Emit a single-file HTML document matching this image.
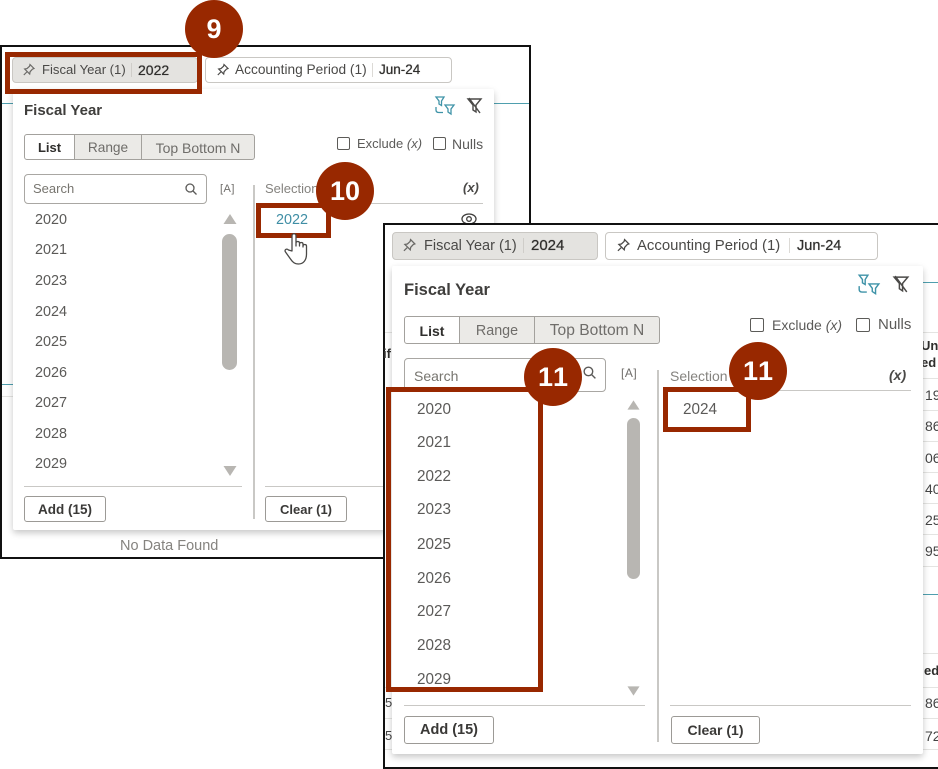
<!DOCTYPE html>
<html lang="en">
<head>
<meta charset="utf-8">
<title>Fiscal Year filter</title>
<style>
html,body{margin:0;padding:0;background:#fff}
body{position:relative;width:938px;height:769px;overflow:hidden;font-family:"Liberation Sans",sans-serif;color:#3f3e3c;filter:blur(.3px)}
div,span,svg{position:absolute;box-sizing:border-box}
.t{white-space:nowrap;line-height:20px;height:20px}
.v{text-shadow:0 0 .6px #2f2e2c}
.frame{background:#fff;border:2px solid #111}
.pop{background:#fff;box-shadow:0 3px 7px rgba(0,0,0,.22);border-radius:2px}
.chip{border:1px solid #c9c7c3;border-radius:4px;background:#fff}
.chip.on{background:#e4e3e0}
.btn{border:1px solid #9c9a96;border-radius:3px;background:#fff;text-align:center;font-weight:bold;color:#3a3937;white-space:nowrap}
.seg{border:1px solid #a3a19d;background:#ebeae7;text-align:center;color:#6f6d6a;white-space:nowrap}
.seg.on{background:#fff;color:#2f2e2c;font-weight:bold}
.cb{border:1.5px solid #5c5b58;border-radius:2px;background:#fff}
.hr{background:#c9c8c5;height:1px}
.vr{background:#c9c8c5;width:2px}
.sb{background:#b8b6b2;border-radius:8px}
.y{color:#5b5a58;white-space:nowrap;line-height:20px;height:20px}
.red{border:5px solid #982800}
.c{background:#982800;border-radius:50%;width:58px;height:58px;color:#fff;font-weight:bold;font-size:27px;line-height:58px;text-align:center;font-kerning:none}
.bg{color:#444;font-size:14px;white-space:nowrap;line-height:18px}
.ln{width:15px;height:1px;background:#e4e4e2;left:923px}
.ll{width:7px;height:1px;background:#e4e4e2;left:385px}
</style>
</head>
<body>

<!-- FRAME 1 -->
<div class="frame" style="left:0;top:45px;width:531px;height:514px"></div>
<div style="left:2px;top:103px;width:11px;height:1px;background:#4f9fae"></div>
<div style="left:494px;top:103px;width:35px;height:1px;background:#4f9fae"></div>
<div style="left:2px;top:384px;width:11px;height:1px;background:#4f9fae"></div>
<div style="left:2px;top:396px;width:11px;height:1px;background:#e4e4e2"></div>

<div class="chip on" style="left:12px;top:57px;width:186px;height:26px"></div>
<svg style="left:22px;top:63px" width="14" height="14" viewBox="0 0 14 14" fill="none" stroke="#6a6966" stroke-width="1.2"><path d="M8 1.500l4 4-1.500.6-2.400 2.600-.4 2.300-5-5 2.300-.4 2.600-2.400zM4.800 9L1.800 12"/></svg>
<span class="t" style="left:42px;top:60px;font-size:13.100px;color:#4a4947">Fiscal Year (1)</span>
<div style="left:131px;top:63px;width:1px;height:14px;background:#cfcdc9"></div>
<span class="t v" style="left:138px;top:60px;font-size:14px;color:#2f2e2c">2022</span>

<div class="chip" style="left:205px;top:57px;width:247px;height:26px"></div>
<svg style="left:216px;top:63px" width="14" height="14" viewBox="0 0 14 14" fill="none" stroke="#4a4947" stroke-width="1.2"><path d="M8 1.500l4 4-1.500.6-2.400 2.600-.4 2.300-5-5 2.300-.4 2.600-2.400zM4.800 9L1.800 12"/></svg>
<span class="t" style="left:235px;top:60px;font-size:13.700px;color:#4a4947">Accounting Period (1)</span>
<div style="left:372px;top:63px;width:1px;height:14px;background:#dcdad6"></div>
<span class="t v" style="left:379px;top:60px;font-size:13.500px;color:#2f2e2c">Jun-24</span>

<div class="pop" style="left:13px;top:89px;width:481px;height:441px"></div>
<span class="t" style="left:24px;top:101px;font-size:15px;font-weight:bold;color:#3f3e3c">Fiscal Year</span>

<svg style="left:434px;top:96px" width="22" height="20" viewBox="0 0 22 20" fill="none" stroke="#3f93a8" stroke-width="1.3"><path d="M2 1h8L7.500 5v4.500L5 8V5zM11 9h9l-3 4v5l-3-2v-3zM2 11v3c0 1.500 1 2.500 3 2.500h4"/></svg>
<svg style="left:466px;top:97px" width="18" height="18" viewBox="0 0 18 18" fill="none" stroke="#4a4947" stroke-width="1.4"><path d="M2 2h13l-5 6v7l-3-2V8zM3 1l11 15"/></svg>

<div class="seg on" style="left:24px;top:134px;width:51px;height:26px;font-size:13px;line-height:26px;border-radius:3px 0 0 3px">List</div>
<div class="seg" style="left:74px;top:134px;width:68px;height:26px;font-size:13.700px;line-height:26px">Range</div>
<div class="seg" style="left:141px;top:134px;width:114px;height:26px;font-size:14px;line-height:26px;border-radius:0 3px 3px 0">Top Bottom N</div>

<div class="cb" style="left:337px;top:137px;width:13px;height:13px"></div>
<span class="t" style="left:357px;top:134px;font-size:13px;color:#5b5a58">Exclude <i>(x)</i></span>
<div class="cb" style="left:433px;top:137px;width:13px;height:13px"></div>
<span class="t" style="left:452px;top:134px;font-size:14px;color:#5b5a58">Nulls</span>

<div style="left:24px;top:174px;width:183px;height:30px;border:1px solid #a9a7a3;border-radius:4px"></div>
<span class="t" style="left:33px;top:179px;font-size:13px;color:#77756f">Search</span>
<svg style="left:184px;top:182px" width="14" height="14" viewBox="0 0 14 14" fill="none" stroke="#5b5a58" stroke-width="1.3"><circle cx="6" cy="6" r="4"/><path d="M9 9l3.500 3.500"/></svg>
<span class="t" style="left:220px;top:179px;font-size:11px;color:#6f6d6a;letter-spacing:.5px">[A]</span>

<span class="t" style="left:265px;top:179px;font-size:13px;color:#85837f">Selection</span>
<span class="t" style="left:463px;top:178px;font-size:13px;font-style:italic;color:#4a4947;font-weight:bold">(x)</span>
<div class="hr" style="left:265px;top:203px;width:218px"></div>
<div class="vr" style="left:253px;top:185px;height:334px"></div>

<span class="y" style="left:35px;top:210px;font-size:14.400px">2020</span>
<span class="y" style="left:35px;top:240px;font-size:14.400px">2021</span>
<span class="y" style="left:35px;top:271px;font-size:14.400px">2023</span>
<span class="y" style="left:35px;top:302px;font-size:14.400px">2024</span>
<span class="y" style="left:35px;top:332px;font-size:14.400px">2025</span>
<span class="y" style="left:35px;top:363px;font-size:14.400px">2026</span>
<span class="y" style="left:35px;top:393px;font-size:14.400px">2027</span>
<span class="y" style="left:35px;top:424px;font-size:14.400px">2028</span>
<span class="y" style="left:35px;top:454px;font-size:14.400px">2029</span>

<svg style="left:223px;top:214px" width="14" height="10" viewBox="0 0 14 10"><path d="M7 0l6.500 10H.5z" fill="#b8b6b2"/></svg>
<div class="sb" style="left:222px;top:234px;width:15px;height:136px"></div>
<svg style="left:223px;top:466px" width="14" height="10" viewBox="0 0 14 10"><path d="M.5 0h13L7 10z" fill="#b8b6b2"/></svg>

<div class="hr" style="left:24px;top:486px;width:218px"></div>
<div class="hr" style="left:265px;top:486px;width:125px"></div>
<div class="btn" style="left:24px;top:496px;width:82px;height:26px;font-size:13.500px;line-height:25px">Add (15)</div>
<div class="btn" style="left:265px;top:496px;width:82px;height:26px;font-size:13px;line-height:25px">Clear (1)</div>
<span class="t" style="left:120px;top:536px;font-size:14.500px;color:#85837f">No Data Found</span>

<span class="t" style="left:276px;top:210px;font-size:14.400px;color:#3f8ea5">2022</span>
<svg style="left:460px;top:211px" width="18" height="14" viewBox="0 0 18 14" fill="none" stroke="#3f3e3c" stroke-width="1.3"><ellipse cx="9" cy="8" rx="7" ry="5"/><circle cx="9" cy="8" r="2.300"/></svg>

<div class="red" style="left:5px;top:52px;width:197px;height:42px"></div>
<div class="red" style="left:256px;top:203px;width:75px;height:35px"></div>
<svg style="left:283px;top:231px" width="30" height="36" viewBox="0 0 30 36" fill="#fff" stroke="#4a4947" stroke-width="1.3" stroke-linejoin="round"><path d="M9 20V5c0-3 4-3 4 0v10l0-3c0-2 3.500-2 3.500 0v3-2c0-2 3.500-2 3.500 0v3-1c0-2 3.500-2 3.500 0v8c0 6-3 10-8 10-4 0-6-2-8-5l-5-7c-1.500-2 1-4 3-2z"/></svg>
<div class="c" style="left:185px;top:0">9</div>
<div class="c" style="left:316px;top:162px">10</div>

<!-- FRAME 2 -->
<div class="frame" style="left:383px;top:223px;width:555px;height:546px;border-right:0"></div>

<div style="left:923px;top:282px;width:15px;height:1px;background:#4f9fae"></div>
<div style="left:923px;top:594px;width:15px;height:1px;background:#4f9fae"></div>
<div class="ll" style="top:332px"></div>
<div class="ln" style="top:332px"></div>
<div class="ln" style="top:378px"></div>
<div class="ln" style="top:410px"></div>
<div class="ln" style="top:441px"></div>
<div class="ln" style="top:472px"></div>
<div class="ln" style="top:503px"></div>
<div class="ln" style="top:534px"></div>
<div class="ln" style="top:566px"></div>
<div class="ln" style="top:653px"></div>
<div class="ln" style="top:687px"></div>
<div class="ln" style="top:718px"></div>
<div class="ln" style="top:749px"></div>
<div class="ll" style="top:687px"></div>
<div class="ll" style="top:718px"></div>
<div class="ll" style="top:749px"></div>

<span class="bg" style="left:383px;top:345px;font-weight:bold;color:#2f2e2c;font-size:13px">if</span>
<span class="bg" style="left:385px;top:694px;font-size:13px">5</span>
<span class="bg" style="left:385px;top:727px;font-size:13px">5</span>

<span class="bg" style="left:921px;top:337px;font-weight:bold;color:#2f2e2c;font-size:13px">Un</span>
<span class="bg" style="left:921px;top:354px;font-weight:bold;color:#2f2e2c;font-size:13px">ed</span>
<span class="bg" style="left:925px;top:386px">19</span>
<span class="bg" style="left:925px;top:417px">86</span>
<span class="bg" style="left:925px;top:449px">06</span>
<span class="bg" style="left:925px;top:480px">40</span>
<span class="bg" style="left:925px;top:511px">25</span>
<span class="bg" style="left:925px;top:542px">95</span>
<span class="bg" style="left:924px;top:662px;font-weight:bold;color:#2f2e2c;font-size:13px">ed</span>
<span class="bg" style="left:925px;top:694px">86</span>
<span class="bg" style="left:925px;top:727px">72</span>

<div class="chip on" style="left:392px;top:232px;width:206px;height:28px"></div>
<svg style="left:402px;top:238px" width="15" height="15" viewBox="0 0 14 14" fill="none" stroke="#6a6966" stroke-width="1.2"><path d="M8 1.500l4 4-1.500.6-2.400 2.600-.4 2.300-5-5 2.300-.4 2.600-2.400zM4.800 9L1.800 12"/></svg>
<span class="t" style="left:424px;top:236px;font-size:14.500px;color:#4a4947">Fiscal Year (1)</span>
<div style="left:523px;top:238px;width:1px;height:15px;background:#cfcdc9"></div>
<span class="t v" style="left:531px;top:236px;font-size:15px;color:#2f2e2c">2024</span>

<div class="chip" style="left:605px;top:232px;width:273px;height:28px"></div>
<svg style="left:616px;top:238px" width="15" height="15" viewBox="0 0 14 14" fill="none" stroke="#4a4947" stroke-width="1.2"><path d="M8 1.500l4 4-1.500.6-2.400 2.600-.4 2.300-5-5 2.300-.4 2.600-2.400zM4.800 9L1.800 12"/></svg>
<span class="t" style="left:637px;top:236px;font-size:14.900px;color:#4a4947">Accounting Period (1)</span>
<div style="left:789px;top:238px;width:1px;height:15px;background:#dcdad6"></div>
<span class="t v" style="left:797px;top:236px;font-size:14.500px;color:#2f2e2c">Jun-24</span>

<div class="pop" style="left:392px;top:266px;width:531px;height:488px"></div>
<span class="t" style="left:404px;top:280px;font-size:16.500px;font-weight:bold;color:#3f3e3c">Fiscal Year</span>

<svg style="left:857px;top:274px" width="24" height="22" viewBox="0 0 22 20" fill="none" stroke="#3f93a8" stroke-width="1.3"><path d="M2 1h8L7.500 5v4.500L5 8V5zM11 9h9l-3 4v5l-3-2v-3zM2 11v3c0 1.500 1 2.500 3 2.500h4"/></svg>
<svg style="left:892px;top:275px" width="19" height="19" viewBox="0 0 18 18" fill="none" stroke="#4a4947" stroke-width="1.4"><path d="M2 2h13l-5 6v7l-3-2V8zM3 1l11 15"/></svg>

<div class="seg on" style="left:404px;top:316px;width:56px;height:28px;font-size:14px;line-height:28px;border-radius:3px 0 0 3px">List</div>
<div class="seg" style="left:459px;top:316px;width:76px;height:28px;font-size:14.300px;line-height:28px">Range</div>
<div class="seg" style="left:534px;top:316px;width:126px;height:28px;font-size:15.600px;line-height:28px;border-radius:0 3px 3px 0">Top Bottom N</div>

<div class="cb" style="left:750px;top:318px;width:14px;height:14px"></div>
<span class="t" style="left:772px;top:315px;font-size:14px;color:#5b5a58">Exclude <i>(x)</i></span>
<div class="cb" style="left:856px;top:318px;width:14px;height:14px"></div>
<span class="t" style="left:878px;top:315px;font-size:15px;color:#5b5a58">Nulls</span>

<div style="left:404px;top:358px;width:202px;height:34px;border:1px solid #a9a7a3;border-radius:4px"></div>
<span class="t" style="left:414px;top:366px;font-size:14px;color:#77756f">Search</span>
<svg style="left:582px;top:365px" width="15" height="15" viewBox="0 0 14 14" fill="none" stroke="#5b5a58" stroke-width="1.3"><circle cx="6" cy="6" r="4"/><path d="M9 9l3.500 3.500"/></svg>
<span class="t" style="left:621px;top:363px;font-size:12px;color:#6f6d6a;letter-spacing:.5px">[A]</span>

<span class="t" style="left:670px;top:366px;font-size:14px;color:#85837f">Selection</span>
<span class="t" style="left:889px;top:365px;font-size:14px;font-style:italic;font-weight:bold;color:#4a4947">(x)</span>
<div class="hr" style="left:670px;top:390px;width:241px"></div>
<div class="vr" style="left:657px;top:370px;height:372px"></div>

<span class="y" style="left:417px;top:400px;font-size:15.300px">2020</span>
<span class="y" style="left:417px;top:433px;font-size:15.300px">2021</span>
<span class="y" style="left:417px;top:467px;font-size:15.300px">2022</span>
<span class="y" style="left:417px;top:500px;font-size:15.300px">2023</span>
<span class="y" style="left:417px;top:535px;font-size:15.300px">2025</span>
<span class="y" style="left:417px;top:569px;font-size:15.300px">2026</span>
<span class="y" style="left:417px;top:602px;font-size:15.300px">2027</span>
<span class="y" style="left:417px;top:636px;font-size:15.300px">2028</span>
<span class="y" style="left:417px;top:670px;font-size:15.300px">2029</span>

<span class="y" style="left:683px;top:400px;font-size:15.300px">2024</span>

<svg style="left:627px;top:400px" width="13" height="10" viewBox="0 0 14 10"><path d="M7 0l6.500 10H.5z" fill="#b8b6b2"/></svg>
<div class="sb" style="left:627px;top:418px;width:13px;height:161px"></div>
<svg style="left:627px;top:686px" width="13" height="10" viewBox="0 0 14 10"><path d="M.5 0h13L7 10z" fill="#b8b6b2"/></svg>

<div class="hr" style="left:404px;top:705px;width:241px"></div>
<div class="hr" style="left:670px;top:705px;width:241px"></div>
<div class="btn" style="left:404px;top:716px;width:90px;height:28px;font-size:14.500px;line-height:27px">Add (15)</div>
<div class="btn" style="left:671px;top:716px;width:89px;height:28px;font-size:14px;line-height:27px">Clear (1)</div>

<div class="red" style="left:386px;top:387px;width:157px;height:305px"></div>
<div class="red" style="left:663px;top:387px;width:88px;height:45px"></div>
<div class="c" style="left:524px;top:348px">11</div>
<div class="c" style="left:729px;top:342px">11</div>

</body>
</html>
